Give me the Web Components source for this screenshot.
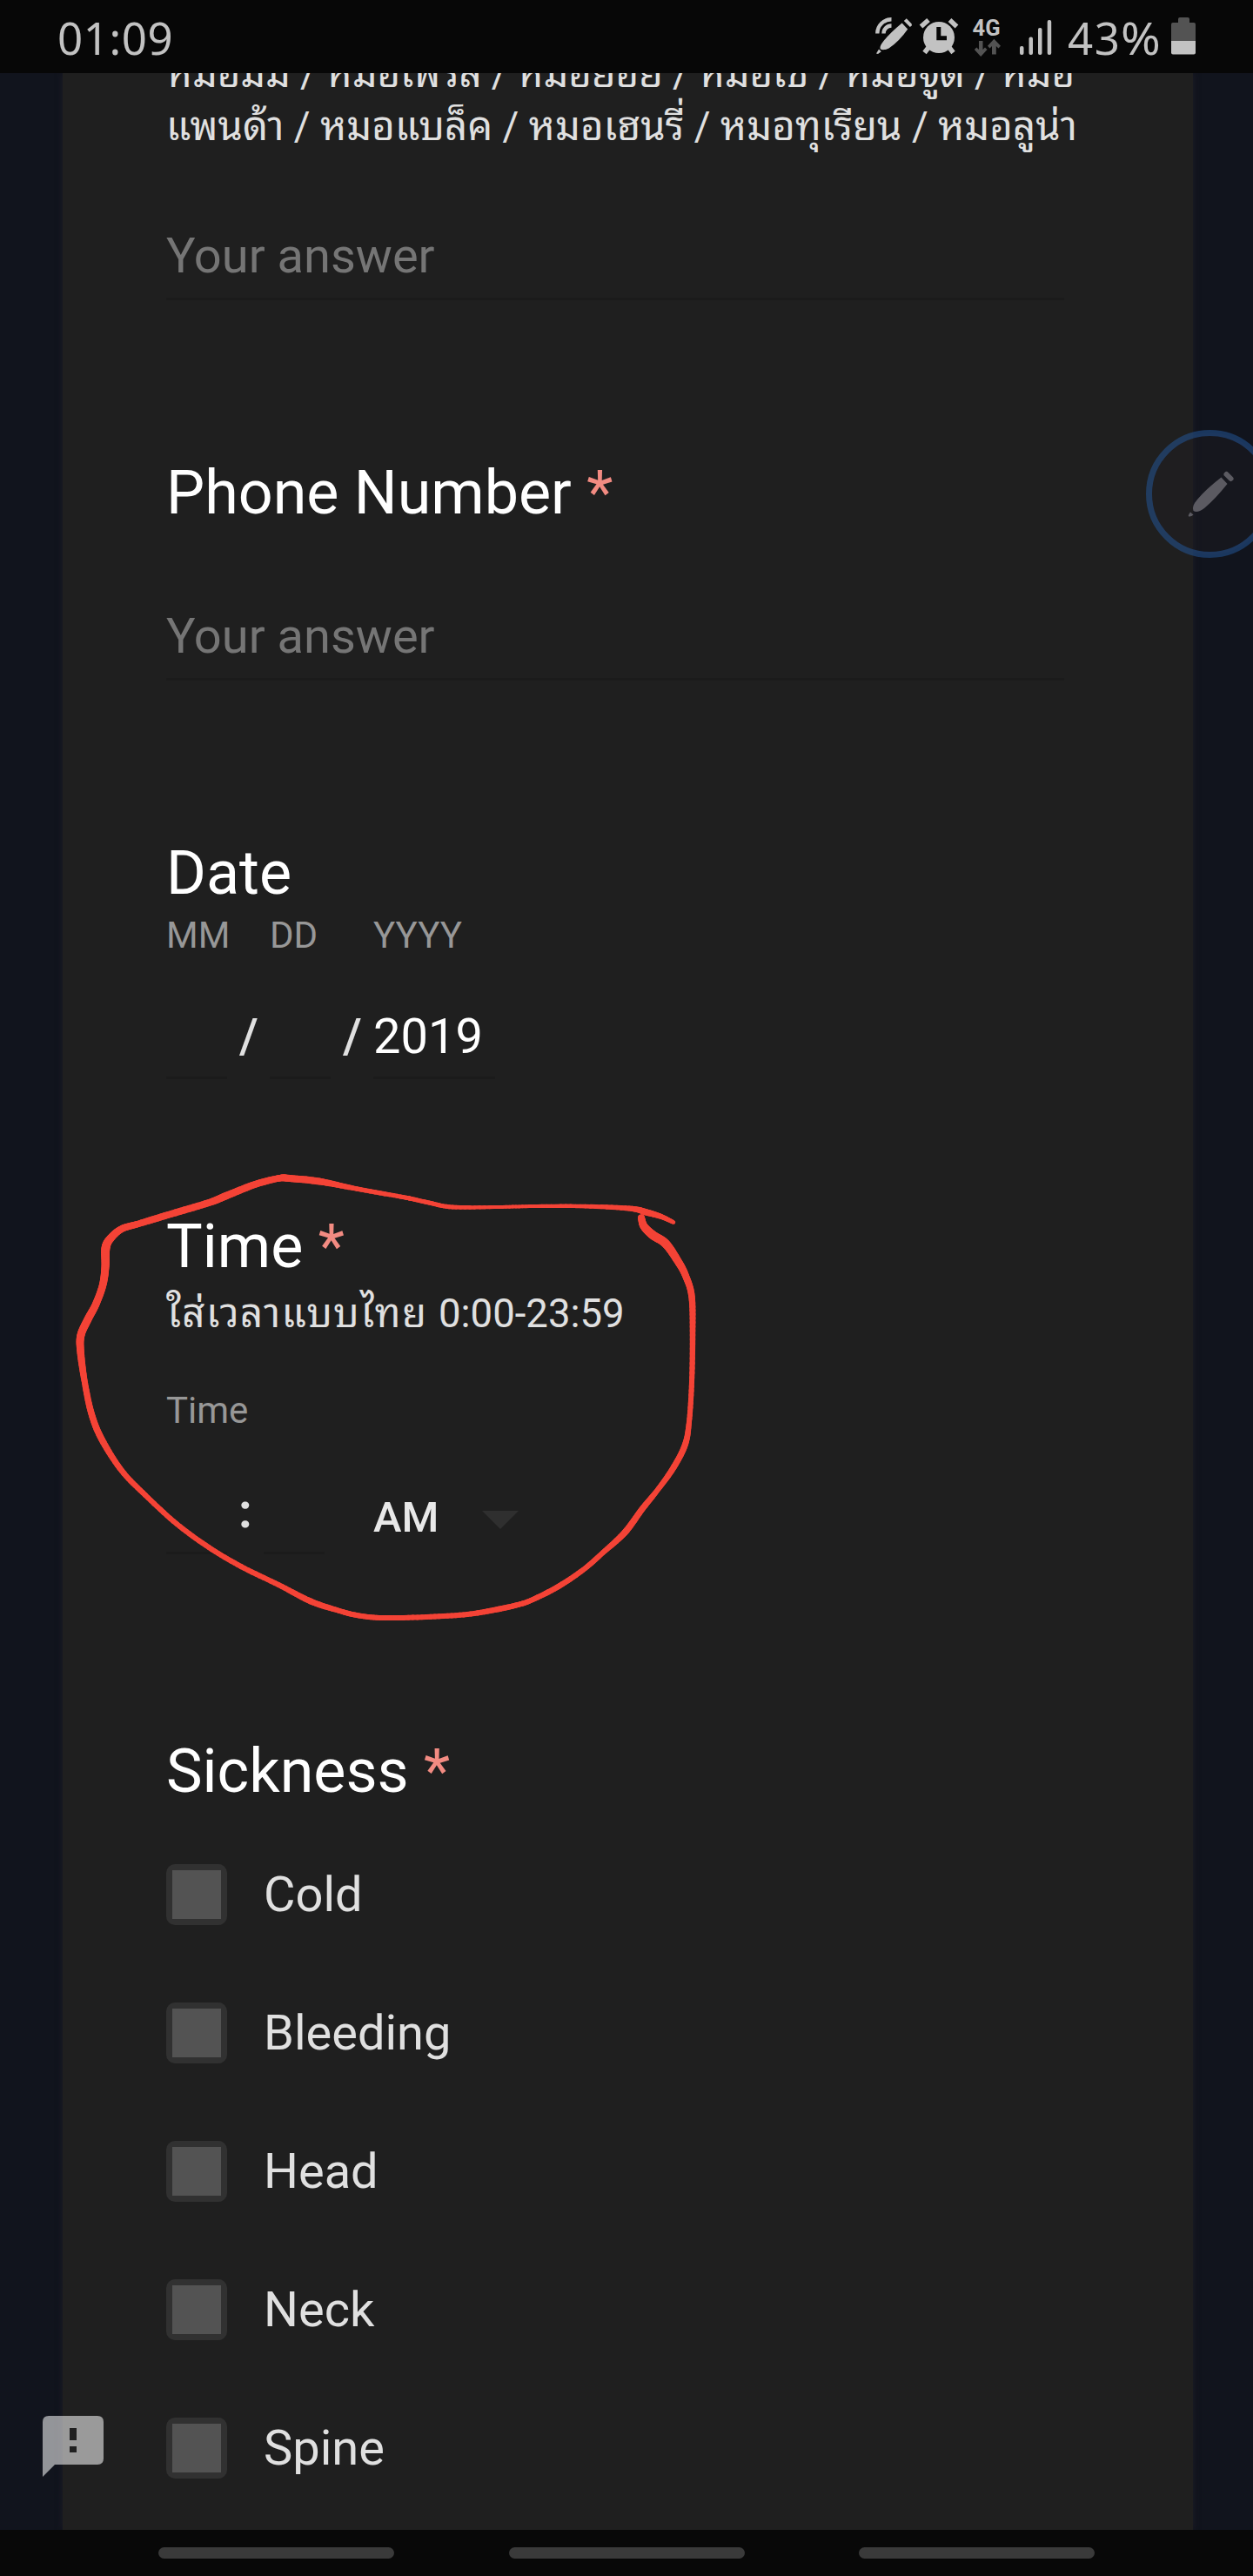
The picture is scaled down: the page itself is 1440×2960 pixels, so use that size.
<!DOCTYPE html>
<html lang="th">
<head>
<meta charset="utf-8">
<title>Form</title>
<style>
html,body{margin:0;padding:0;background:#11141d}
body{font-family:Roboto,"Noto Sans Thai Looped","Noto Looped Thai","Droid Sans Thai","Loma","Noto Sans Thai","Noto Sans",sans-serif;width:1440px;height:2960px;overflow:hidden}
</style>
</head>
<body>
<phone-screen></phone-screen>
<script>
const define=(name,html,ready)=>customElements.define(name,class extends HTMLElement{
  constructor(){
    super();
    const t=document.createElement('template');
    t.innerHTML=html;
    this.attachShadow({mode:'open'}).append(t.content.cloneNode(true));
  }
  connectedCallback(){ if(ready) ready(this); }
});

define('status-bar',`<style>
:host{display:flex;box-sizing:border-box;height:84px;background:#070707;color:#c2c2c2;font:51px/70px "Noto Sans",sans-serif;padding:8px 66px 0 66px;justify-content:space-between;position:relative;z-index:2}
.r{display:flex;align-items:flex-start}
.time{letter-spacing:.6px}
.pct{width:119px;letter-spacing:1.500px;white-space:nowrap}
.pct span{display:inline-block;transform:scaleX(1.080);transform-origin:0 0}
svg{display:block;margin-top:-8px}
</style>
<span class="time">01:09</span>
<div class="r">
<svg width="224" height="84" viewBox="1003 0 224 84" fill="#c2c2c2">
<g fill="none" stroke="#c2c2c2" stroke-width="4.4"><path d="M1008.300 38.500A16 16 0 0 1 1024.500 22.300M1015.500 38.500A9 9 0 0 1 1024.500 29.500"/></g>
<path d="M1036.600 26.500L1043.200 33.500Q1033 48 1021.500 55.500Q1014.500 58.800 1011.800 56.200Q1010.500 53.500 1014.800 48Q1022 38.500 1036.600 26.500Z"/>
<path d="M1038.800 24L1041.800 21.300L1047.800 27.500V29.500L1045.800 31Z"/>
<path d="M1010 56.500L1012.800 59.300L1009 62L1007 61.500Z"/>
<circle cx="1079" cy="43" r="18"/>
<path d="M1058.500 30.500L1067 23M1091.500 23L1099.500 30.500M1067.500 54L1062.500 60.500M1090.500 54L1095.500 60.500" stroke="#c2c2c2" stroke-width="5.500"/>
<path d="M1078.800 31V43.700H1088" fill="none" stroke="#070707" stroke-width="5"/>
<text x="1117.500" y="40.500" font-family="Roboto" font-weight="700" font-size="25.500">4G</text>
<path fill="#535353" d="M1125 47H1129.500V57L1132 54.500L1134.500 57L1127.200 65L1119.800 57L1122.300 54.500L1125 57ZM1140 62.500H1144.800V53L1147.500 55.500L1150 52.800L1142.400 44.700L1135 52.800L1137.500 55.500L1140 53Z"/>
<rect x="1172" y="53" width="4.500" height="10" rx="2"/><rect x="1182.500" y="42.500" width="4.500" height="20.500" rx="2"/><rect x="1193" y="32" width="4.500" height="31" rx="2"/><rect x="1203.700" y="23" width="4.500" height="40" rx="2"/>
</svg>
<span class="pct">43<span>%</span></span>
<svg width="28" height="84" viewBox="0 0 28 84"><path fill="#535353" d="M0 47V28Q0 26 2 26H8V22Q8 20 10 20H19Q21 20 21 22V26H26Q28 26 28 28V47Z"/><path fill="#c2c2c2" d="M0 47H28V60.500Q28 62.500 26 62.500H2Q0 62.500 0 60.500Z"/></svg>
</div>`);

define('question-title',`<style>
:host{display:block;font-size:70px;line-height:82px;color:#fff;white-space:nowrap}
i{font-style:normal;color:#f28b82;display:none}
:host([required]) i{display:inline}
</style><slot></slot><i> *</i>`);

define('answer-input',`<style>
:host{display:block;width:1032px;font-size:56px;line-height:66px;color:#757575;padding-bottom:15px;border-bottom:3px solid #1b1b1b;padding-top:12px}
</style><slot></slot>`);

define('number-field',`<style>
:host{display:block;box-sizing:border-box;width:70px;height:95px;font-size:56px;line-height:66px;color:#fff;padding-top:13px;border-bottom:3px solid #1b1b1b}
:host([wide]){width:140px}
</style><slot></slot>`);

define('date-field',`<style>
:host{display:grid;grid-template-columns:70px 49px 70px 49px 140px;row-gap:45px;padding-top:6px;margin-bottom:-1px}
span{font-size:42px;line-height:50px;color:#979797;grid-row:1;white-space:nowrap}
.s{font-size:56px;line-height:66px;color:#e0e0e0;font-weight:500;padding-top:13px;grid-row:2;padding-left:14px}
number-field{grid-row:2}
</style>
<span style="grid-column:1">MM</span><span style="grid-column:3">DD</span><span style="grid-column:5">YYYY</span>
<number-field style="grid-column:1"></number-field><span class="s" style="grid-column:2">/</span>
<number-field style="grid-column:3"></number-field><span class="s" style="grid-column:4">/</span>
<number-field wide style="grid-column:5">2019</number-field>`);

define('time-field',`<style>
:host{display:block;color:#e0e0e0}
label{display:block;font-size:42px;line-height:50px;color:#979797}
.row{display:flex;height:95px;margin-top:45px}
.c{width:42px;box-sizing:border-box;padding-left:13px;padding-top:12px;font-size:56px;line-height:66px;font-weight:700}
.am{margin-left:56px;padding-top:24px;font-size:49px;line-height:58px;font-weight:500;color:#e8e8e8;width:125px}
svg{margin-top:45px}
</style>
<label>Time</label>
<div class="row"><number-field></number-field><span class="c">:</span><number-field></number-field><span class="am">AM</span>
<svg width="42" height="21" viewBox="0 0 42 21"><path d="M0 0H42L21 21Z" fill="#2f2f2f"/></svg></div>`);

define('check-option',`<style>
:host{display:flex;align-items:center;height:70px;gap:42px;font-size:56px;line-height:66px;color:#e0e0e0}
b{display:block;box-sizing:border-box;width:70px;height:70px;border-radius:10px;background:#313131;padding:7px}
b::before{content:"";display:block;height:56px;background:#535353}
span{margin-top:-1px}
</style><b></b><span><slot></slot></span>`);

/* A run of text whose letter spacing is set so that it fills the given width. */
define('fit-run',`<style>:host{display:inline-block;white-space:pre}</style><slot></slot>`,el=>{
  const n=[...new Intl.Segmenter('th',{granularity:'grapheme'}).segment(el.textContent)].length;
  const w=el.getBoundingClientRect().width;
  el.style.letterSpacing=((+el.getAttribute('width')-w)/n)+'px';
});

define('form-help',`<style>:host{display:block;font-size:45.500px;line-height:61px;color:#e0e0e0;white-space:nowrap}
::slotted(div){height:61px}</style><slot></slot>`);

define('form-card',`<style>
:host{display:block;box-sizing:border-box;width:1299px;height:2823px;margin-left:72px;padding-left:119px;background:#1f1f1f;box-shadow:0 0 7px #1e1d28}
section{display:block}
.names{margin-top:-30px}
.options{display:grid;row-gap:89px}
</style>
<section class="names"><form-help><div><fit-run width="1044">หมอมิ้ม / หมอเฟิร์ส / หมอย้อย / หมอเซ / หมอจูด / หมอ</fit-run></div><div><fit-run width="1047">แพนด้า / หมอแบล็ค / หมอเฮนรี่ / หมอทุเรียน / หมอลูน่า</fit-run></div></form-help>
<answer-input style="margin-top:73px">Your answer</answer-input></section>
<section style="padding-top:180px"><question-title required>Phone Number</question-title><answer-input style="margin-top:79px">Your answer</answer-input></section>
<section style="padding-top:180px"><question-title>Date</question-title><date-field></date-field></section>
<section style="padding-top:152px"><question-title required>Time</question-title><form-help style="margin-top:6px"><div><fit-run width="313">ใส่เวลาแบบไทย </fit-run>0:00-23:59</div></form-help><time-field style="margin-top:56px"></time-field></section>
<section style="padding-top:208px"><question-title required>Sickness</question-title>
<div class="options" style="margin-top:66px"><check-option>Cold</check-option><check-option>Bleeding</check-option><check-option>Head</check-option><check-option>Neck</check-option><check-option>Spine</check-option></div></section>`);

define('pen-button',`<style>:host{display:block;position:absolute;left:1317px;top:494px;width:123px;height:147px;overflow:hidden;z-index:3}svg{display:block}</style>
<svg width="147" height="147" viewBox="1317 494 147 147"><circle cx="1390.500" cy="567.500" r="70" fill="rgba(32,30,34,.35)" stroke="rgba(36,90,160,.5)" stroke-width="7"/>
<g fill="#5b5a61"><path d="M1403.500 548.500L1410.500 556Q1397 573 1384 584Q1376 590 1371.500 587Q1369 582 1376 574Q1386 562 1403.500 548.500Z"/><path d="M1409.500 545L1414.500 550" stroke="#5b5a61" stroke-width="6" stroke-linecap="round"/><path d="M1368 588.500L1371.500 591.500Q1369 594 1366.500 593.500H1366Q1365 592 1368 588.500Z"/></g></svg>`);

define('report-button',`<style>:host{display:block;position:absolute;left:49px;top:2776px;width:70px;height:70px;z-index:3}svg{display:block}</style>
<svg width="70" height="70" viewBox="0 0 70 70"><path fill="#fff" fill-opacity=".55" fill-rule="evenodd" d="M7 0H63Q70 0 70 7V49Q70 56 63 56H14L0 70V7Q0 0 7 0Z"/><path fill="#202020" d="M31 14H39V28H31ZM31 35H39V42H31Z"/></svg>`);

/* Freehand ink: x, y and pen width at each sample, joined by a Catmull-Rom curve. */
const INK=[[737,1399,7.5],[740,1409,9],[750,1419,10],[765,1429,10],[779,1449,9],[788,1466,8],[795,1490,7.5],[796,1534,6.5],[795,1588,6],[792,1634,6],[787,1661,7],[773,1688,7],[755,1713,6],[738,1734,7],[718,1761,7.5],[693,1784,6],[670,1804,6],[640,1824,6.5],[610,1839,6],[595,1844,6],[573,1849,6.5],[537,1855,6],[490,1858,6],[440,1859,6],[410,1856,6],[387,1850,6],[357,1840,7],[320,1821,6],[277,1800,6],[240,1778,6],[203,1751,6],[167,1718,6],[140,1690,6.5],[117,1654,7.5],[105,1624,7.5],[97,1586,7],[92.5,1552,8.5],[93,1534,9],[101,1516,9],[110,1499,8.5],[118,1477,8.5],[121,1456,9],[121.5,1434,10],[127,1423,9],[140,1412,8],[160,1406,7.5],[193,1396,8],[240,1382,8],[260,1374,8.5],[293,1361,8],[320,1354,7.5],[333,1354,8],[367,1357.5,8],[410,1366,5.5],[460,1375,5],[473,1377.5,5],[493,1382,5],[520,1387,5],[573,1387,4],[613,1386,4],[667,1386,4.5],[723,1388.5,6],[743,1393,7.5],[760,1398,6],[774,1404.5,4.5]];
define('ink-circle',`<style>:host{display:block;position:absolute;left:80px;top:1340px;width:730px;height:530px;z-index:3}svg{display:block}</style>
<svg width="730" height="530" viewBox="80 1340 730 530" fill="none" stroke="#f44336" stroke-linecap="round"></svg>`,el=>{
  const at=i=>INK[Math.max(0,Math.min(INK.length-1,i))];
  let out='',prev=INK[0];
  for(let i=0;i<INK.length-1;i++){
    for(let s=1;s<=10;s++){
      const t=s/10;
      const p=[0,1,2].map(k=>{
        const a=at(i-1)[k],b=at(i)[k],c=at(i+1)[k],d=at(i+2)[k];
        return k===2?b+(c-b)*t:.5*(2*b+(c-a)*t+(2*a-5*b+4*c-d)*t*t+(3*b-a-3*c+d)*t*t*t);
      });
      out+=`<path d="M${prev[0].toFixed(2)} ${prev[1].toFixed(2)}L${p[0].toFixed(2)} ${p[1].toFixed(2)}" stroke-width="${p[2].toFixed(2)}"/>`;
      prev=p;
    }
  }
  el.shadowRoot.querySelector('svg').innerHTML=out;
});

define('nav-bar',`<style>:host{display:flex;box-sizing:border-box;height:53px;background:#080808;padding:20px 182px 0;justify-content:space-between;position:relative;z-index:2}
i{display:block;width:271px;height:13px;border-radius:7px;background:#3a3a3a}</style><i></i><i></i><i></i>`);

define('phone-screen',`<style>:host{display:flex;flex-direction:column;position:relative;width:1440px;height:2960px;overflow:hidden;background:#11141d}</style>
<status-bar></status-bar><form-card></form-card><nav-bar></nav-bar><pen-button></pen-button><report-button></report-button><ink-circle></ink-circle>`);
</script>
</body>
</html>
